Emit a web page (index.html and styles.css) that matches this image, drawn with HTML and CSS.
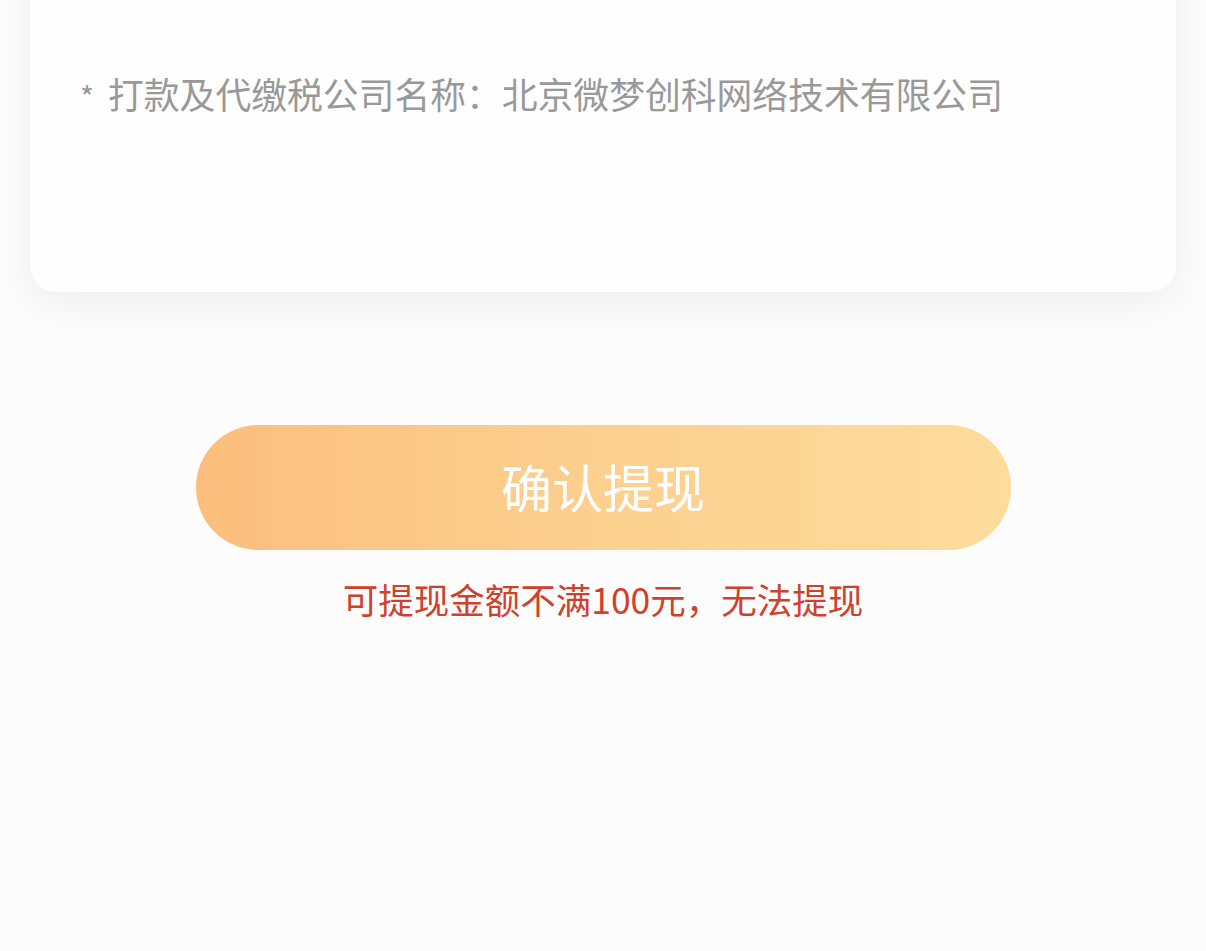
FILE: index.html
```html
<!DOCTYPE html>
<html lang="zh-CN">
<head>
    <meta charset="UTF-8">
    <meta name="viewport" content="width=device-width, initial-scale=1.0">
    <title>提现</title>
    <link rel="stylesheet" href="styles.css">
</head>
<body>
    <div class="page">
        <div class="info-card">
            <p class="company-note"><span class="star">*</span>打款及代缴税公司名称：北京微梦创科网络技术有限公司</p>
        </div>

        <div class="action-area">
            <button class="confirm-btn" type="button">确认提现</button>
            <p class="error-tip">可提现金额不满100元，无法提现</p>
        </div>
    </div>
</body>
</html>
```

FILE: styles.css
```css
* {
    margin: 0;
    padding: 0;
    box-sizing: border-box;
}

body {
    background-color: #fcfcfc;
    font-family: "Noto Sans CJK SC", "Noto Sans", sans-serif;
    overflow: hidden;
    height: 951px;
}

.page {
    padding: 0 30px;
}

.info-card {
    margin-top: -60px;
    height: 352px;
    padding: 128px 50px 0;
    background-color: #fefefe;
    border-radius: 26px;
    box-shadow: 0 10px 40px rgba(0, 0, 0, 0.06);
}

.company-note {
    font-size: 35.8px;
    line-height: 50px;
    color: #999;
    white-space: nowrap;
}

.star {
    display: inline-block;
    width: 28px;
    font-size: 30px;
}

.action-area {
    display: flex;
    flex-direction: column;
    align-items: center;
    padding-top: 133px;
}

.confirm-btn {
    width: 815px;
    height: 125px;
    padding-bottom: 3px;
    border: none;
    border-radius: 63px;
    background: linear-gradient(90deg, #fbbe7d 0%, #fcd08f 50%, #fddc9c 100%);
    color: #fff;
    font-family: inherit;
    font-size: 51px;
    cursor: pointer;
}

.error-tip {
    margin-top: 24px;
    font-size: 35.5px;
    line-height: 50px;
    color: #d0412b;
}
```
